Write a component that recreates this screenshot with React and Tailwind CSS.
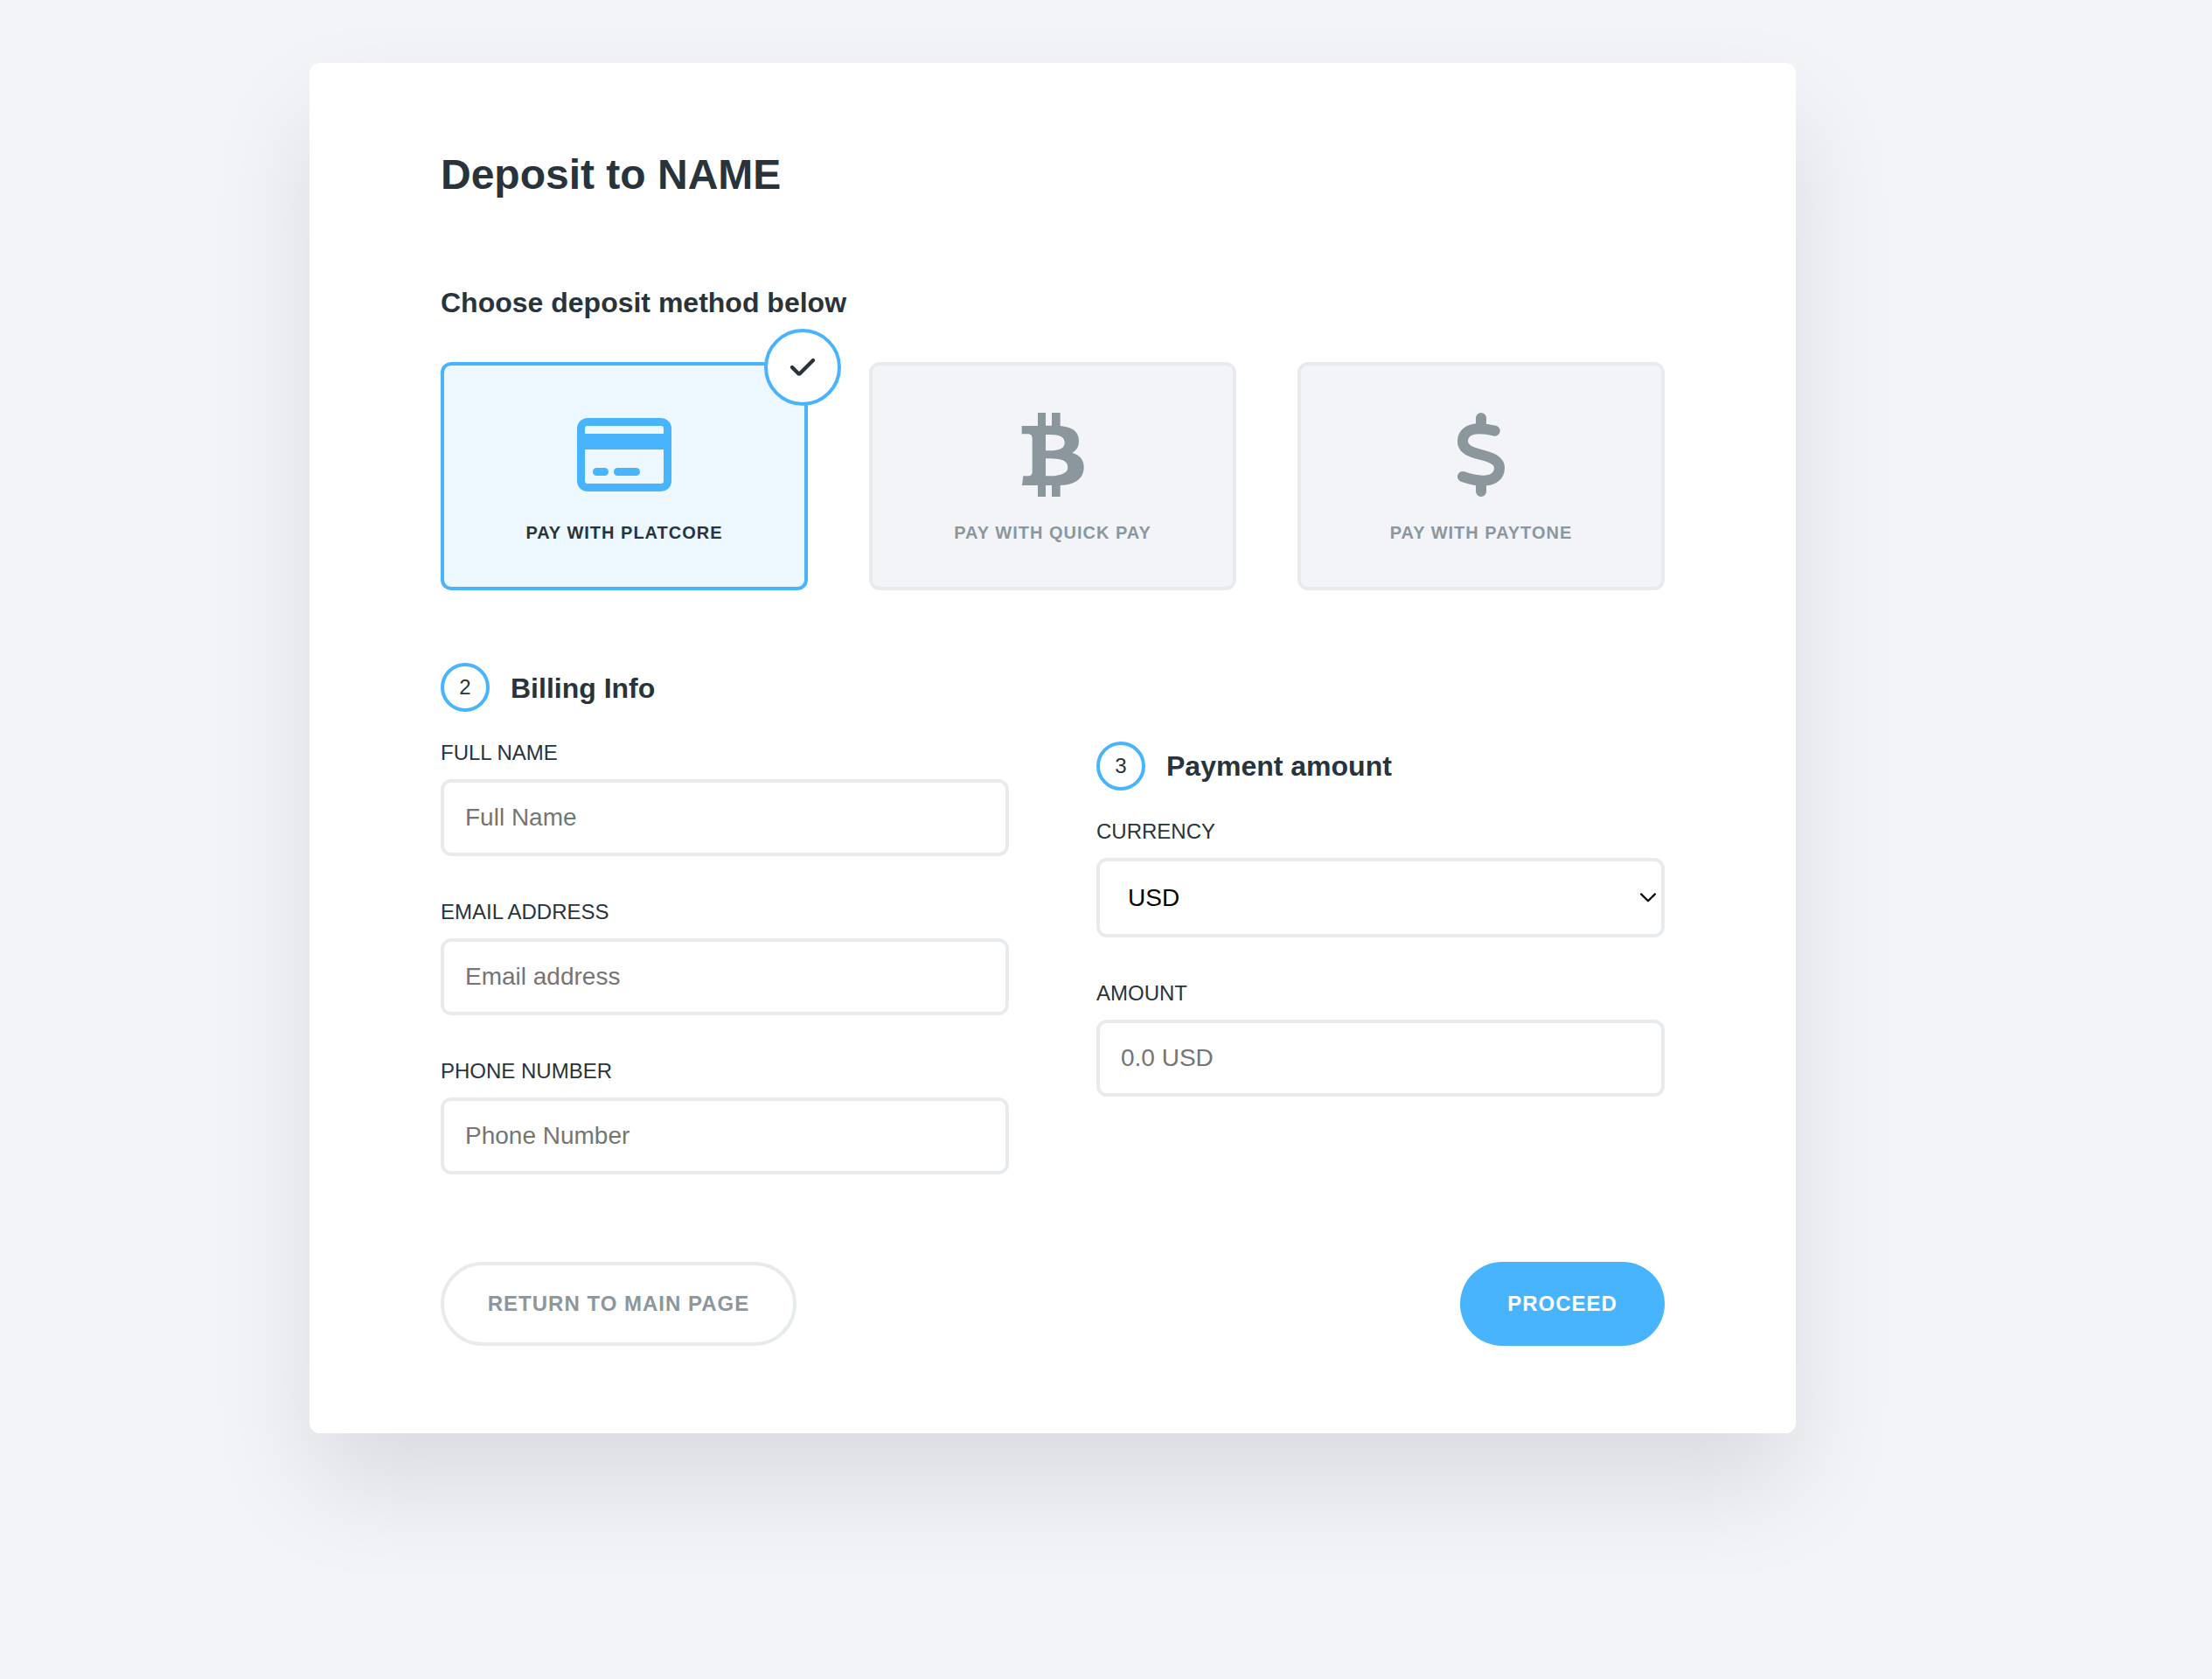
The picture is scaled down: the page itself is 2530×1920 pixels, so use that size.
function CardIcon() {
  return (
    <svg viewBox="0 0 108 96" className="h-24 w-[108px]" fill="currentColor">
      <path
        fillRule="evenodd"
        d="M12 6H96A12 12 0 0 1 108 18V78A12 12 0 0 1 96 90H12A12 12 0 0 1 0 78V18A12 12 0 0 1 12 6ZM12 15A3 3 0 0 0 9 18V24H99V18A3 3 0 0 0 96 15ZM9 42V78A3 3 0 0 0 12 81H96A3 3 0 0 0 99 78V42Z"
      />
      <rect x="18" y="63" width="18" height="9" rx="4.5" />
      <rect x="42" y="63" width="30" height="9" rx="4.5" />
    </svg>
  );
}

function BitcoinIcon() {
  return (
    <svg viewBox="528 216 288 288" className="size-24" fill="currentColor">
      <path
        fillRule="evenodd"
        d="M621 216H648V260H669V216H698V261C740 265 762 281 762 312C762 333 754 345 739 353C765 361 779 377 779 402C779 442 750 463 698 465V504H669V465H648V504H621V465H567L571 433H586C597 433 602 430 602 418V305C602 293 597 289 586 289H566V261H621ZM648 291V346H663C696 346 713 337 713 319C713 300 698 291 663 291ZM648 373V433H663C703 432 724 421 724 404C724 383 707 373 663 373Z"
      />
    </svg>
  );
}

function DollarIcon() {
  return (
    <svg
      viewBox="528 216 288 288"
      className="size-24"
      fill="none"
      stroke="currentColor"
      strokeWidth="36"
      strokeLinecap="round"
      strokeLinejoin="round"
    >
      <path d="M672 234V265M672 456V486M719 278C703 274 684 271 666 271C630 271 609 286 609 314C609 342 636 350 672 360C708 369 735 381 735 405C735 434 712 449 678 449C655 449 629 442 609 435" />
    </svg>
  );
}

function Method({ icon, label, active }) {
  return (
    <button
      type="button"
      className={
        active
          ? "relative flex h-[261px] flex-col items-center rounded-xl border-4 border-[#48b4fd] bg-[#ecf7ff] pt-[54px] text-[#48b4fd]"
          : "relative flex h-[261px] flex-col items-center rounded-xl border-4 border-[#e7ebee] bg-[#f2f4f8] pt-[54px] text-[#8b979c]"
      }
    >
      {icon}
      <span
        className={
          active
            ? "mt-[30px] text-[20px] leading-[22px] font-bold tracking-[1px] text-[#28333b] uppercase"
            : "mt-[30px] text-[20px] leading-[22px] font-bold tracking-[1px] uppercase"
        }
      >
        {label}
      </span>
      {active && (
        <span className="absolute -top-[42px] -right-[42px] flex size-[88px] items-center justify-center rounded-full border-4 border-[#48b4fd] bg-white text-[#28333b]">
          <svg
            viewBox="0 0 40 40"
            className="size-10"
            fill="none"
            stroke="currentColor"
            strokeWidth="4.4"
            strokeLinecap="round"
            strokeLinejoin="bevel"
          >
            <path d="M8 20L16 28L32 12" />
          </svg>
        </span>
      )}
    </button>
  );
}

function StepHeading({ number, children, className }) {
  return (
    <div className="flex h-14 items-center gap-6">
      <span className="flex size-14 items-center justify-center rounded-full border-4 border-[#48b4fd] pb-px text-[24px] leading-[27px]">
        {number}
      </span>
      <h2 className={className}>{children}</h2>
    </div>
  );
}

function Field({ label, children }) {
  return (
    <label className="flex flex-col gap-[17px]">
      <span className="text-[24px] leading-[27px] uppercase">{label}</span>
      {children}
    </label>
  );
}

function TextInput({ placeholder }) {
  return (
    <input
      type="text"
      placeholder={placeholder}
      className="h-[88px] w-full rounded-xl border-4 border-[#e7ebee] bg-white px-6 pb-px text-[28px] outline-none placeholder:text-[#757575]"
    />
  );
}

export default function App() {
  return (
    <main className="min-h-[1920px] bg-[#f2f4f8] pt-[72px] font-['Liberation_Sans',Arial,sans-serif] text-[#28333b]">
      <form className="ml-[354px] w-[1700px] rounded-xl bg-white px-[150px] pt-[99px] pb-[100px] shadow-[0_60px_120px_rgba(0,12,8,0.1)]">
        <h1 className="text-[48px] leading-[57px] font-bold">Deposit to NAME</h1>

        <h2 className="mt-[100px] text-[32px] leading-[36px] font-bold">
          Choose deposit method below
        </h2>
        <div className="mt-[50px] grid grid-cols-3 gap-[70px]">
          <Method active icon={<CardIcon />} label="Pay with Platcore" />
          <Method icon={<BitcoinIcon />} label="Pay with Quick Pay" />
          <Method icon={<DollarIcon />} label="Pay with Paytone" />
        </div>

        <div className="mt-[83px] grid grid-cols-2 gap-[100px]">
          <section>
            <StepHeading number="2" className="pt-0.5 text-[32px] leading-[36px] font-bold">
              Billing Info
            </StepHeading>
            <div className="mt-[33px] flex flex-col gap-[50px]">
              <Field label="Full name">
                <TextInput placeholder="Full Name" />
              </Field>
              <Field label="Email address">
                <TextInput placeholder="Email address" />
              </Field>
              <Field label="Phone number">
                <TextInput placeholder="Phone Number" />
              </Field>
            </div>
          </section>

          <section className="pt-[90px]">
            <StepHeading number="3" className="text-[32px] leading-[36px] font-bold">
              Payment amount
            </StepHeading>
            <div className="mt-[33px] flex flex-col gap-[50px]">
              <Field label="Currency">
                <span className="relative block h-[91px]">
                  <select className="h-full w-full appearance-none rounded-xl border-4 border-[#e7ebee] bg-white px-8 text-[28px] text-black outline-none">
                    <option>USD</option>
                  </select>
                  <svg
                    viewBox="0 0 20 12"
                    className="pointer-events-none absolute top-[39px] right-[9px] h-3 w-5"
                    fill="none"
                    stroke="black"
                    strokeWidth="2.2"
                    strokeLinecap="round"
                    strokeLinejoin="round"
                  >
                    <path d="M2 2.4L10 10.3L18 2.4" />
                  </svg>
                </span>
              </Field>
              <Field label="Amount">
                <TextInput placeholder="0.0 USD" />
              </Field>
            </div>
          </section>
        </div>

        <div className="mt-[100px] flex justify-between">
          <button
            type="button"
            className="h-24 w-[407px] rounded-full border-4 border-[#e7ebee] pb-px text-[24px] leading-[27px] font-bold tracking-[1px] text-[#8b979c] uppercase"
          >
            Return to main page
          </button>
          <button
            type="button"
            className="h-24 w-[234px] rounded-full bg-[#48b4fd] pb-px text-[24px] leading-[27px] font-bold tracking-[1px] text-white uppercase"
          >
            Proceed
          </button>
        </div>
      </form>
    </main>
  );
}
